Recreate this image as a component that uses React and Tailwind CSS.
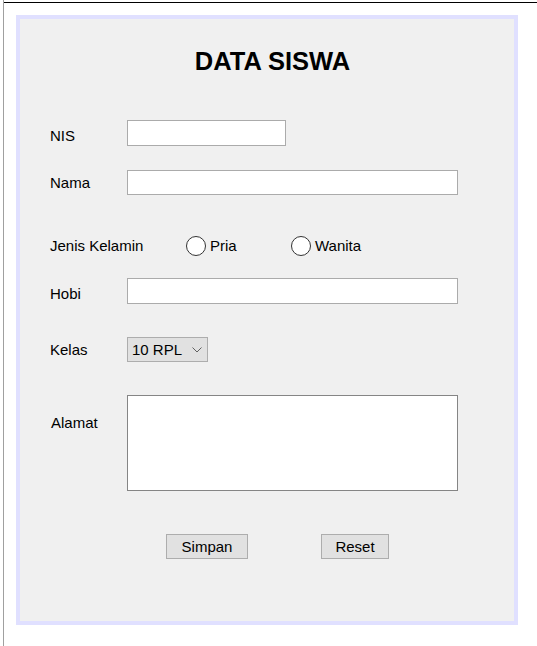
import React from 'react';

const font = { fontFamily: '"Liberation Sans", Arial, sans-serif' };

function Radio({ label, width }) {
    return (
        <label className="flex items-center gap-[4px]" style={{ width }}>
            <span className="w-[20px] h-[20px] rounded-full border border-[#333] bg-white shrink-0" />
            <span>{label}</span>
        </label>
    );
}

export default function App() {
    return (
        <div className="min-h-[646px] bg-white flex text-black text-[15px] leading-[18px]" style={font}>
            {/* garis kiri */}
            <div className="ml-[3px] w-px bg-[#a0a0a0]" />

            <div className="flex-1 mt-[2px] border-t border-black">
                <div className="ml-[12px] mt-[12px] w-[502px] h-[610px] border-4 border-[#e0e0ff] bg-[#f0f0f0] flex flex-col">
                    <h2 className="mt-[28px] pl-[11px] text-center text-[25.5px] leading-[29px] font-bold">DATA SISWA</h2>

                    {/* NIS */}
                    <div className="mt-[44px] flex items-center pl-[30px]">
                        <span className="w-[77px] pt-[5px]">NIS</span>
                        <input className="w-[159px] h-[26px] border border-[#ababab] bg-white outline-none" />
                    </div>

                    {/* Nama */}
                    <div className="mt-[24px] flex items-center pl-[30px]">
                        <span className="w-[77px]">Nama</span>
                        <input className="w-[331px] h-[25px] border border-[#ababab] bg-white outline-none" />
                    </div>

                    {/* Jenis Kelamin */}
                    <div className="mt-[41px] flex items-center pl-[30px] h-[20px]">
                        <span className="w-[136px]">Jenis Kelamin</span>
                        <Radio label="Pria" width="105px" />
                        <Radio label="Wanita" width="90px" />
                    </div>

                    {/* Hobi */}
                    <div className="mt-[22px] flex items-center pl-[30px]">
                        <span className="w-[77px] pt-[5px]">Hobi</span>
                        <input className="w-[331px] h-[26px] border border-[#ababab] bg-white outline-none" />
                    </div>

                    {/* Kelas */}
                    <div className="mt-[33px] flex items-center pl-[30px]">
                        <span className="w-[77px]">Kelas</span>
                        <div className="w-[81px] h-[25px] border border-[#adadad] bg-[#e1e1e1] flex items-center pl-[4px] pr-[5px] justify-between">
                            <span>10 RPL</span>
                            <svg width="10" height="6" viewBox="0 0 10 6" fill="none">
                                <path d="M0.5 0.5 L5 5 L9.5 0.5" stroke="#606060" strokeWidth="1" />
                            </svg>
                        </div>
                    </div>

                    {/* Alamat */}
                    <div className="mt-[33px] flex items-start pl-[31px]">
                        <span className="w-[76px] mt-[19px]">Alamat</span>
                        <textarea className="w-[331px] h-[96px] border border-[#858585] bg-white outline-none resize-none" />
                    </div>

                    {/* Tombol */}
                    <div className="mt-[43px] flex pl-[146px] gap-[73px]">
                        <button className="w-[82px] h-[25px] border border-[#adadad] bg-[#e1e1e1]">Simpan</button>
                        <button className="w-[68px] h-[25px] border border-[#adadad] bg-[#e1e1e1]">Reset</button>
                    </div>
                </div>
            </div>
        </div>
    );
}
